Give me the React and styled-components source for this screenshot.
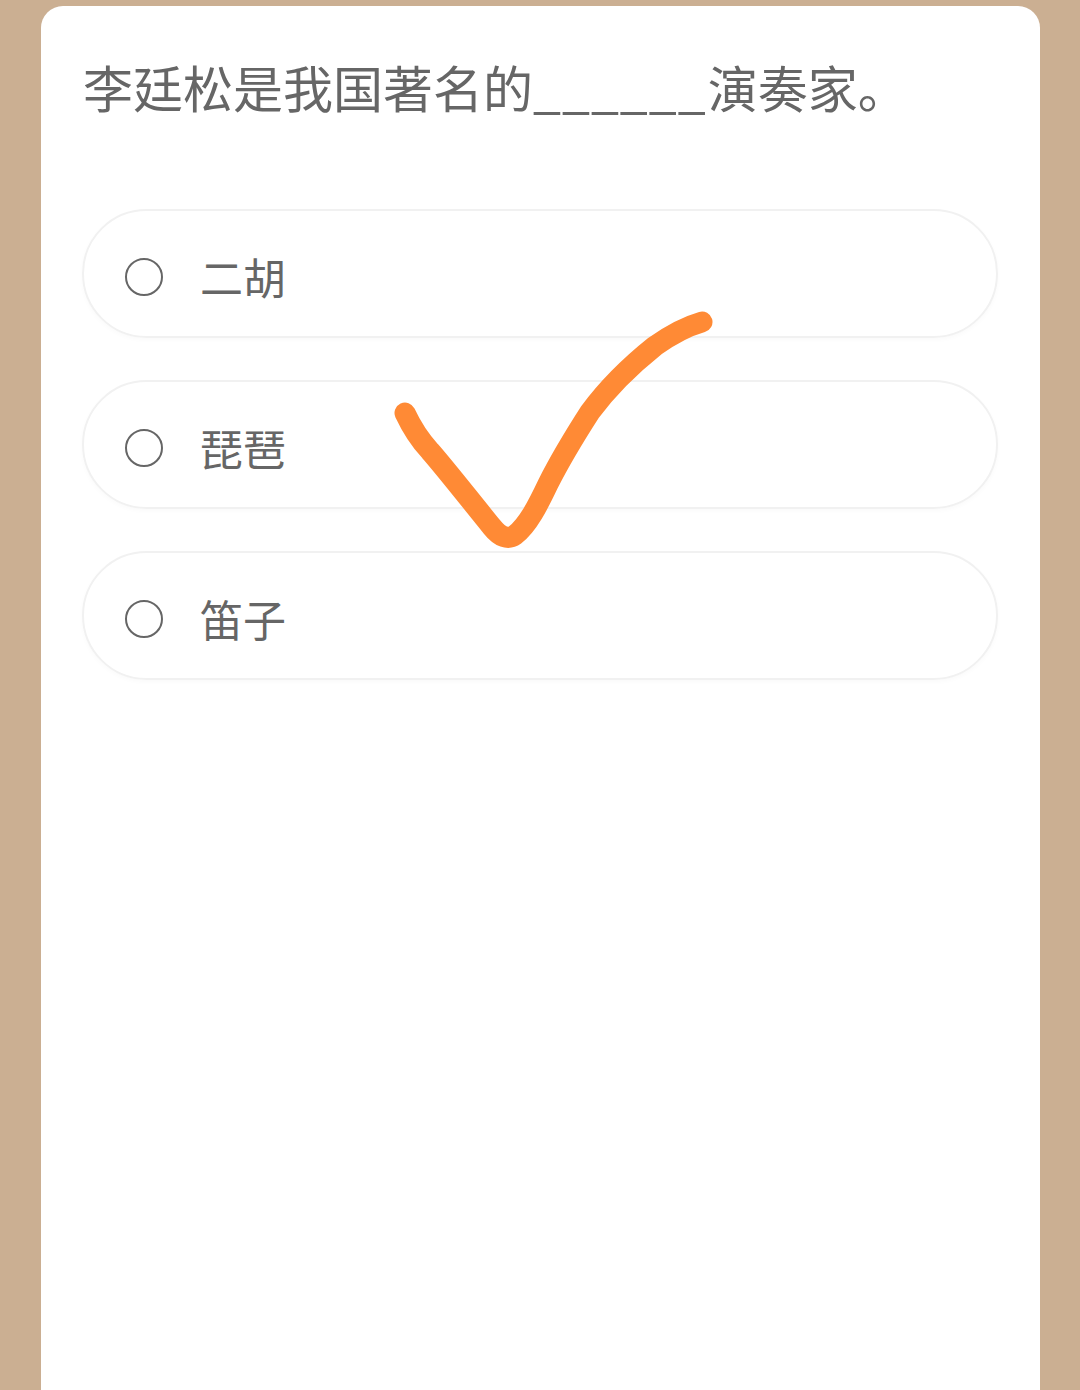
import React from "react";
import styled, { createGlobalStyle } from "styled-components";

const Global = createGlobalStyle`
  html, body { margin: 0; padding: 0; background: #cbaf92; }
  body { font-family: "Noto Sans CJK SC", "Noto Sans", sans-serif; }
`;

const Page = styled.div`
  min-height: 1390px;
  padding: 6px 40px 0 41px;
  box-sizing: border-box;
  display: flex;
`;

const Card = styled.div`
  position: relative;
  flex: 1;
  background: #ffffff;
  border-radius: 22px 22px 0 0;
  padding: 50px 42px 0 41px;
  box-sizing: border-box;
  min-height: 1384px;
`;

const Question = styled.div`
  font-size: 50px;
  line-height: 60px;
  color: #666666;
  white-space: nowrap;
  margin-left: 1px;
`;

const Blank = styled.span`
  letter-spacing: 1px;
  margin-right: 1px;
`;

const Options = styled.div`
  margin-top: 93px;
  display: flex;
  flex-direction: column;
  gap: 42px;
`;

const Option = styled.div`
  height: 129px;
  box-sizing: border-box;
  border: 2px solid #f1f1f1;
  border-radius: 65px;
  box-shadow: 0 2px 5px rgba(0, 0, 0, 0.025);
  display: flex;
  align-items: center;
  padding: 6px 0 0 41px;
  gap: 37px;
`;

const Radio = styled.span`
  width: 38px;
  height: 38px;
  box-sizing: border-box;
  border: 2.5px solid #666666;
  border-radius: 50%;
  flex: none;
`;

const Label = styled.span`
  font-size: 43px;
  color: #666666;
  line-height: 1;
`;

const Check = styled.svg`
  position: absolute;
  left: 339px;
  top: 294px;
  width: 360px;
  height: 270px;
  pointer-events: none;
`;

const options = ["二胡", "琵琶", "笛子"];

export default function App() {
  return (
    <>
      <Global />
      <Page>
        <Card>
          <Question>
            李廷松是我国著名的<Blank>______</Blank>演奏家。
          </Question>
          <Options>
            {options.map((o) => (
              <Option key={o}>
                <Radio />
                <Label>{o}</Label>
              </Option>
            ))}
          </Options>
          <Check viewBox="380 300 360 270">
            <path
              d="M405 413 C412 428 418 438 430 451 C445 468 470 500 492 527 C500 537 508 540 515 535 C528 525 538 505 548 484 C560 460 572 440 590 412 C610 385 635 362 655 346 C672 334 688 326 702 322"
              fill="none"
              stroke="#ff8a35"
              strokeWidth="21"
              strokeLinecap="round"
              strokeLinejoin="round"
            />
          </Check>
        </Card>
      </Page>
    </>
  );
}
